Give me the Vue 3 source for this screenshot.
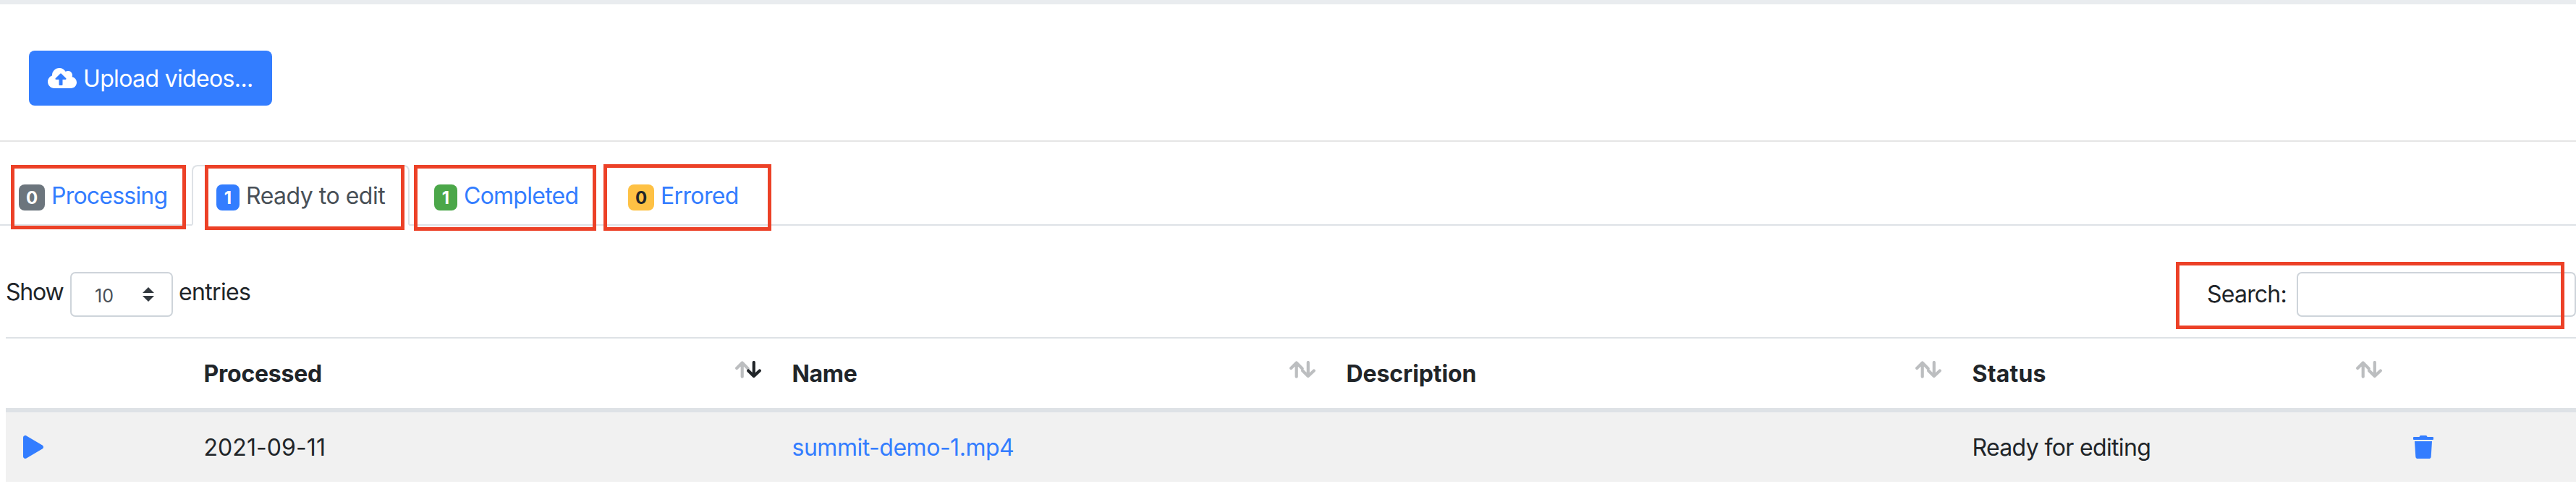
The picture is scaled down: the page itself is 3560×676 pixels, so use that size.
<script setup>
const tabs = [
  { key: 'processing', count: 0, label: 'Processing' },
  { key: 'ready', count: 1, label: 'Ready to edit', active: true },
  { key: 'completed', count: 1, label: 'Completed' },
  { key: 'errored', count: 0, label: 'Errored' },
]
const columns = [
  { key: 'play', label: '' },
  { key: 'processed', label: 'Processed', sortable: true, sorted: 'desc' },
  { key: 'name', label: 'Name', sortable: true },
  { key: 'description', label: 'Description', sortable: true },
  { key: 'status', label: 'Status', sortable: true },
  { key: 'remove', label: '' },
]
</script>

<template>
  <main class="page">
    <section class="toolbar">
      <button class="upload">
        <svg class="cloud" viewBox="0 0 640 512"><path fill="#fff" d="M537.6 226.6c4.1-10.7 6.4-22.4 6.4-34.6 0-53-43-96-96-96-19.7 0-38.1 6-53.3 16.2C367 64.2 315.3 32 256 32c-88.4 0-160 71.6-160 160 0 2.7.1 5.4.2 8.1C40.2 219.8 0 273.2 0 336c0 79.5 64.5 144 144 144h368c70.7 0 128-57.3 128-128 0-61.9-44-113.6-102.4-125.4zM393.4 288H328v112c0 8.8-7.2 16-16 16h-48c-8.8 0-16-7.2-16-16V288h-65.4c-14.3 0-21.4-17.2-11.3-27.4l105.4-105.4c6.2-6.2 16.4-6.2 22.6 0l105.4 105.4c10.1 10.1 2.9 27.4-11.3 27.4z" /></svg>
        <span class="upload-label">Upload videos...</span>
      </button>
    </section>

    <nav class="tabs">
      <a v-for="t in tabs" :key="t.key" class="tab" :class="[t.key, { active: t.active }]">
        <span class="badge">{{ t.count }}</span>
        <span class="tab-label">{{ t.label }}</span>
      </a>
    </nav>

    <section class="controls">
      <div class="length">
        <span class="show">Show</span>
        <span class="select">
          <span>10</span>
          <svg viewBox="0 0 4 5"><path fill="#343a40" d="M2 0L0 2h4zm0 5L0 3h4z" /></svg>
        </span>
        <span>entries</span>
      </div>
      <label class="search"><span>Search:</span><input type="text" /></label>
    </section>

    <section class="table">
      <div class="row head">
        <div v-for="c in columns" :key="c.key" class="cell" :class="c.key">
          <span>{{ c.label }}</span>
          <svg v-if="c.sortable" class="sort" viewBox="0 0 36 24">
            <path d="M9.7 21.7V2.6M2.2 10L9.7 2.5L17.6 10.4" stroke="#bcbec0" />
            <path d="M25.8 2V21M18.2 13.4L25.8 21L33.8 13.4" :stroke="c.sorted ? '#212529' : '#bcbec0'" />
          </svg>
        </div>
      </div>
      <div class="row body">
        <div class="cell play">
          <svg viewBox="0 0 448 512"><path fill="#337dff" d="M424.4 214.7L72.4 6.6C43.8-10.3 0 6.1 0 47.9V464c0 37.5 40.7 60.1 72.4 41.3l352-208c31.4-18.5 31.5-64.1 0-82.6z" /></svg>
        </div>
        <div class="cell date">2021-09-11</div>
        <div class="cell"><a class="file">summit-demo-1.mp4</a></div>
        <div class="cell"></div>
        <div class="cell">Ready for editing</div>
        <div class="cell trash">
          <svg viewBox="0 0 448 512"><path fill="#337dff" d="M432 32H312l-9.4-18.7A24 24 0 0 0 281.1 0H166.8a23.72 23.72 0 0 0-21.4 13.3L136 32H16A16 16 0 0 0 0 48v32a16 16 0 0 0 16 16h416a16 16 0 0 0 16-16V48a16 16 0 0 0-16-16zM53.2 467a48 48 0 0 0 47.9 45h245.8a48 48 0 0 0 47.9-45L416 128H32z" /></svg>
        </div>
      </div>
    </section>

    <i class="mark m-processing"></i>
    <i class="mark m-ready"></i>
    <i class="mark m-completed"></i>
    <i class="mark m-errored"></i>
    <i class="mark m-search"></i>
  </main>
</template>

<style>
body { margin: 0; background: #fff; }
</style>

<style scoped>
.page {
  position: relative;
  box-sizing: border-box;
  height: 676px;
  overflow: hidden;
  border-top: 6px solid #e9ecef;
  background: #fff;
  color: #212529;
  font: 32px/48px Inter, "Liberation Sans", sans-serif;
  letter-spacing: -0.65px;
  white-space: nowrap;
}
.page * { box-sizing: border-box; }
svg { display: block; }

.toolbar { height: 190px; padding: 64px 40px 0; border-bottom: 2px solid #e5e5e5; }
.upload {
  display: flex;
  align-items: center;
  gap: 9px;
  width: 336px;
  height: 76px;
  padding: 0 0 0 26px;
  border: 0;
  border-radius: 8px;
  background: #337dff;
  color: #fff;
  font: inherit;
  letter-spacing: inherit;
}
.upload-label { margin-top: 2px; }
.cloud { width: 40px; height: 32px; }

.tabs { display: flex; height: 84px; margin-top: 32px; color: #337dff; }
.tab {
  display: flex;
  align-items: flex-start;
  padding: 18px 0 0 34px;
  border-bottom: 2px solid #dee2e6;
}
.badge {
  width: 36px;
  height: 36px;
  margin-top: 9px;
  border-radius: 8px;
  font-size: 24px;
  font-weight: 700;
  line-height: 37px;
  letter-spacing: 0;
  text-align: center;
}
.processing { width: 265px; padding-left: 26px; letter-spacing: -0.78px; }
.processing .badge { background: #6c757d; color: #fff; }
.ready {
  width: 301px;
  padding: 16px 0 0 32px;
  border: 2px solid #dee2e6;
  border-bottom-color: #fff;
  border-radius: 8px 8px 0 0;
  color: #495057;
  letter-spacing: -0.5px;
}
.ready .badge, .completed .badge { width: 32px; }
.ready .badge { background: #337dff; color: #fff; }
.completed { width: 268px; letter-spacing: -0.74px; }
.completed .badge { background: #4ba749; color: #fff; }
.errored { flex: 1; }
.errored .badge { background: #fec144; color: #212529; }
.tab-label { margin: 1px 0 0 9px; }

.controls { display: flex; justify-content: space-between; height: 154px; padding: 64px 0 0 8px; }
.length { display: flex; align-items: flex-start; line-height: 56px; }
.show { width: 89px; letter-spacing: -1.2px; }
.select {
  display: flex;
  align-items: flex-start;
  justify-content: space-between;
  width: 142px;
  height: 62px;
  margin-right: 8px;
  padding: 4px 24px 0 32px;
  border: 2px solid #ced4da;
  border-radius: 7px;
  color: #495057;
  font-size: 25px;
  letter-spacing: 0.2px;
  line-height: 54px;
}
.select svg { width: 16px; height: 20px; margin-top: 15px; }
.search { display: flex; line-height: 62px; letter-spacing: -0.78px; }
.search span { width: 124px; }
.search input {
  width: 386px;
  height: 62px;
  border: 2px solid #ced4da;
  border-radius: 7px;
  background: #fff;
}

.table { margin-left: 8px; }
.row { display: grid; grid-template-columns: 249px 813px 766px 865px 609px 1fr; }
.cell { padding: 25px 18px 0 24.5px; }
.head { height: 104px; border-top: 2px solid #dee2e6; border-bottom: 6px solid #dee2e6; font-weight: 700; letter-spacing: -0.1px; }
.head .cell { display: flex; justify-content: space-between; }
.head .processed { letter-spacing: -0.24px; }
.head .name { letter-spacing: -0.32px; }
.head .status { letter-spacing: 0.19px; }
.sort {
  width: 36px;
  height: 24px;
  margin-top: 6px;
  fill: none;
  stroke-width: 4.2;
  stroke-linecap: round;
  stroke-linejoin: round;
}
.body { height: 96px; background: #f1f1f1; }
.body svg { width: 28px; height: 32px; margin-top: 7px; }
.cell.play { padding-left: 24px; }
.cell.trash { padding-left: 25px; }
.date { letter-spacing: 0.08px; }
.file { color: #337dff; letter-spacing: -0.48px; }

.mark { position: absolute; border: 5px solid #ec4127; pointer-events: none; }
.m-processing { left: 15px; top: 222px; width: 242px; height: 89px; }
.m-ready { left: 283px; top: 222px; width: 276px; height: 90px; }
.m-completed { left: 572px; top: 222px; width: 252px; height: 91px; }
.m-errored { left: 834px; top: 221px; width: 232px; height: 92px; }
.m-search { left: 3007px; top: 356px; width: 537px; height: 93px; }
</style>
